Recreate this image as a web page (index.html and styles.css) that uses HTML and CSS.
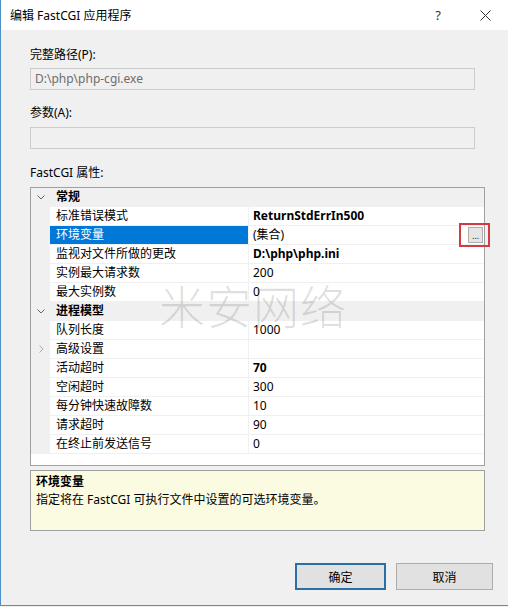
FILE: index.html
```html
<!DOCTYPE html>
<html lang="zh-CN">
<head>
<meta charset="utf-8">
<title>编辑 FastCGI 应用程序</title>
<link rel="stylesheet" href="styles.css">
</head>
<body>
<div class="window">
  <div class="titlebar">
    <span class="title">编辑 FastCGI 应用程序</span>
    <span class="help">?</span>
    <svg class="close" width="11" height="11" viewBox="0 0 11 11"><path d="M0.5 0.5 L10.5 10.5 M10.5 0.5 L0.5 10.5" stroke="#333" stroke-width="1" fill="none"/></svg>
  </div>
  <div class="content">
    <div class="label first">完整路径(P):</div>
    <div class="textbox">D:\php\php-cgi.exe</div>
    <div class="label">参数(A):</div>
    <div class="textbox"></div>
    <div class="label third">FastCGI 属性:</div>
    <div class="grid">
      <div class="row cat"><span class="margin"><svg class="chev" width="8" height="5" viewBox="0 0 8 5"><path d="M0.5 0.5 L4 4 L7.5 0.5" stroke="#666" fill="none"/></svg></span><span class="catname">常规</span></div>
      <div class="row"><span class="margin"></span><span class="name">标准错误模式</span><span class="val b">ReturnStdErrIn500</span></div>
      <div class="row"><span class="margin"></span><span class="name sel">环境变量</span><span class="val">(集合)<span class="dots">…<span class="mark"></span></span></span></div>
      <div class="row"><span class="margin"></span><span class="name">监视对文件所做的更改</span><span class="val b">D:\php\php.ini</span></div>
      <div class="row"><span class="margin"></span><span class="name">实例最大请求数</span><span class="val">200</span></div>
      <div class="row"><span class="margin"></span><span class="name">最大实例数</span><span class="val">0</span></div>
      <div class="row cat"><span class="margin"><svg class="chev" width="8" height="5" viewBox="0 0 8 5"><path d="M0.5 0.5 L4 4 L7.5 0.5" stroke="#666" fill="none"/></svg></span><span class="catname">进程模型</span></div>
      <div class="row"><span class="margin"></span><span class="name">队列长度</span><span class="val">1000</span></div>
      <div class="row"><span class="margin"><svg class="chev" width="5" height="8" viewBox="0 0 5 8"><path d="M0.5 0.5 L4 4 L0.5 7.5" stroke="#aaa" fill="none"/></svg></span><span class="name">高级设置</span><span class="val"></span></div>
      <div class="row"><span class="margin"></span><span class="name">活动超时</span><span class="val b">70</span></div>
      <div class="row"><span class="margin"></span><span class="name">空闲超时</span><span class="val">300</span></div>
      <div class="row"><span class="margin"></span><span class="name">每分钟快速故障数</span><span class="val">10</span></div>
      <div class="row"><span class="margin"></span><span class="name">请求超时</span><span class="val">90</span></div>
      <div class="row"><span class="margin"></span><span class="name">在终止前发送信号</span><span class="val">0</span></div>
      <div class="watermark">米安网络</div>
    </div>
    <div class="desc">
      <div class="desc-title">环境变量</div>
      <div class="desc-text">指定将在 FastCGI 可执行文件中设置的可选环境变量。</div>
    </div>
    <div class="buttons">
      <button class="btn ok">确定</button>
      <button class="btn cancel">取消</button>
    </div>
  </div>
</div>
</body>
</html>
```
FILE: styles.css
```css
html, body {
  margin: 0;
  padding: 0;
  background: #f0f0f0;
}
body {
  font-family: "Segoe UI", "Noto Sans", "Noto Sans CJK SC", sans-serif;
  font-size: 12px;
  color: #000;
}
.window {
  width: 508px;
  height: 606px;
  box-sizing: border-box;
  border-left: 1px solid #4f8fc4;
  border-bottom: 1px solid #5b8db5;
  background: #f0f0f0;
  display: flex;
  flex-direction: column;
}
.titlebar {
  height: 30px;
  background: #fff;
  display: flex;
  align-items: center;
  padding-left: 9px;
  flex: none;
}
.title {
  flex: 1;
  font-size: 12px;
}
.help {
  font-size: 13px;
  color: #333;
  margin-right: 39px;
}
.close {
  margin-right: 17px;
}
.content {
  padding: 0 23px 0 29px;
  display: flex;
  flex-direction: column;
}
.label {
  line-height: 16px;
  margin-top: 15px;
  margin-bottom: 6px;
}
.label.first {
  margin-top: 17px;
  margin-bottom: 5px;
}
.label.third {
  margin-top: 16px;
}
.textbox {
  height: 20px;
  margin-right: 10px;
  border: 1px solid #cccccc;
  background: #f0f0f0;
  color: #6d6d6d;
  line-height: 20px;
  padding-left: 4px;
}
.grid {
  position: relative;
  height: 277px;
  border: 1px solid #a0a0a0;
  background: #fff;
  overflow: visible;
}
.row {
  display: grid;
  grid-template-columns: 19px 199px 1fr;
  height: 19px;
  line-height: 18px;
}
.row > span {
  box-sizing: border-box;
  border-bottom: 1px solid #f0f0f0;
  white-space: nowrap;
}
.margin {
  background: #f0f0f0;
  display: flex;
  align-items: center;
  justify-content: center;
  padding-left: 1px;
}
.row.cat {
  background: #f0f0f0;
}
.catname {
  grid-column: 2 / 4;
  font-weight: bold;
  padding-left: 6px;
}
.name {
  padding-left: 6px;
  border-right: 1px solid #f0f0f0;
}
.name.sel {
  background: #0078d7;
  color: #fff;
}
.val {
  padding-left: 4px;
  display: flex;
  align-items: center;
}
.val.b {
  font-weight: bold;
}
.dots {
  position: relative;
  margin-left: auto;
  margin-right: 1px;
  width: 13px;
  height: 14px;
  border: 1px solid #adadad;
  background: #e5e5e5;
  font-size: 9px;
  line-height: 16px;
  text-align: center;
  color: #222;
}
.mark {
  position: absolute;
  left: -10px;
  top: -5px;
  width: 27px;
  height: 20px;
  border: 2px solid #d33a41;
}
.watermark {
  position: absolute;
  left: 128px;
  top: 83px;
  font-family: "Noto Sans CJK SC", sans-serif;
  font-weight: 300;
  font-size: 46px;
  letter-spacing: 1px;
  color: rgba(0, 0, 0, 0.13);
  pointer-events: none;
}
.desc {
  margin-top: 4px;
  height: 55px;
  border: 1px solid #a0a0a0;
  background: #fbfbe1;
  padding: 2px 5px;
  line-height: 18px;
}
.desc-title {
  font-weight: bold;
}
.buttons {
  margin-top: 32px;
  display: flex;
  justify-content: flex-end;
  gap: 10px;
  margin-right: -8px;
}
.btn {
  height: 27px;
  font-family: inherit;
  font-size: 12px;
  background: #e1e1e1;
  color: #000;
  box-sizing: border-box;
}
.btn.ok {
  width: 91px;
  border: 2px solid #2a6fa8;
}
.btn.cancel {
  width: 97px;
  border: 1px solid #adadad;
}
```
